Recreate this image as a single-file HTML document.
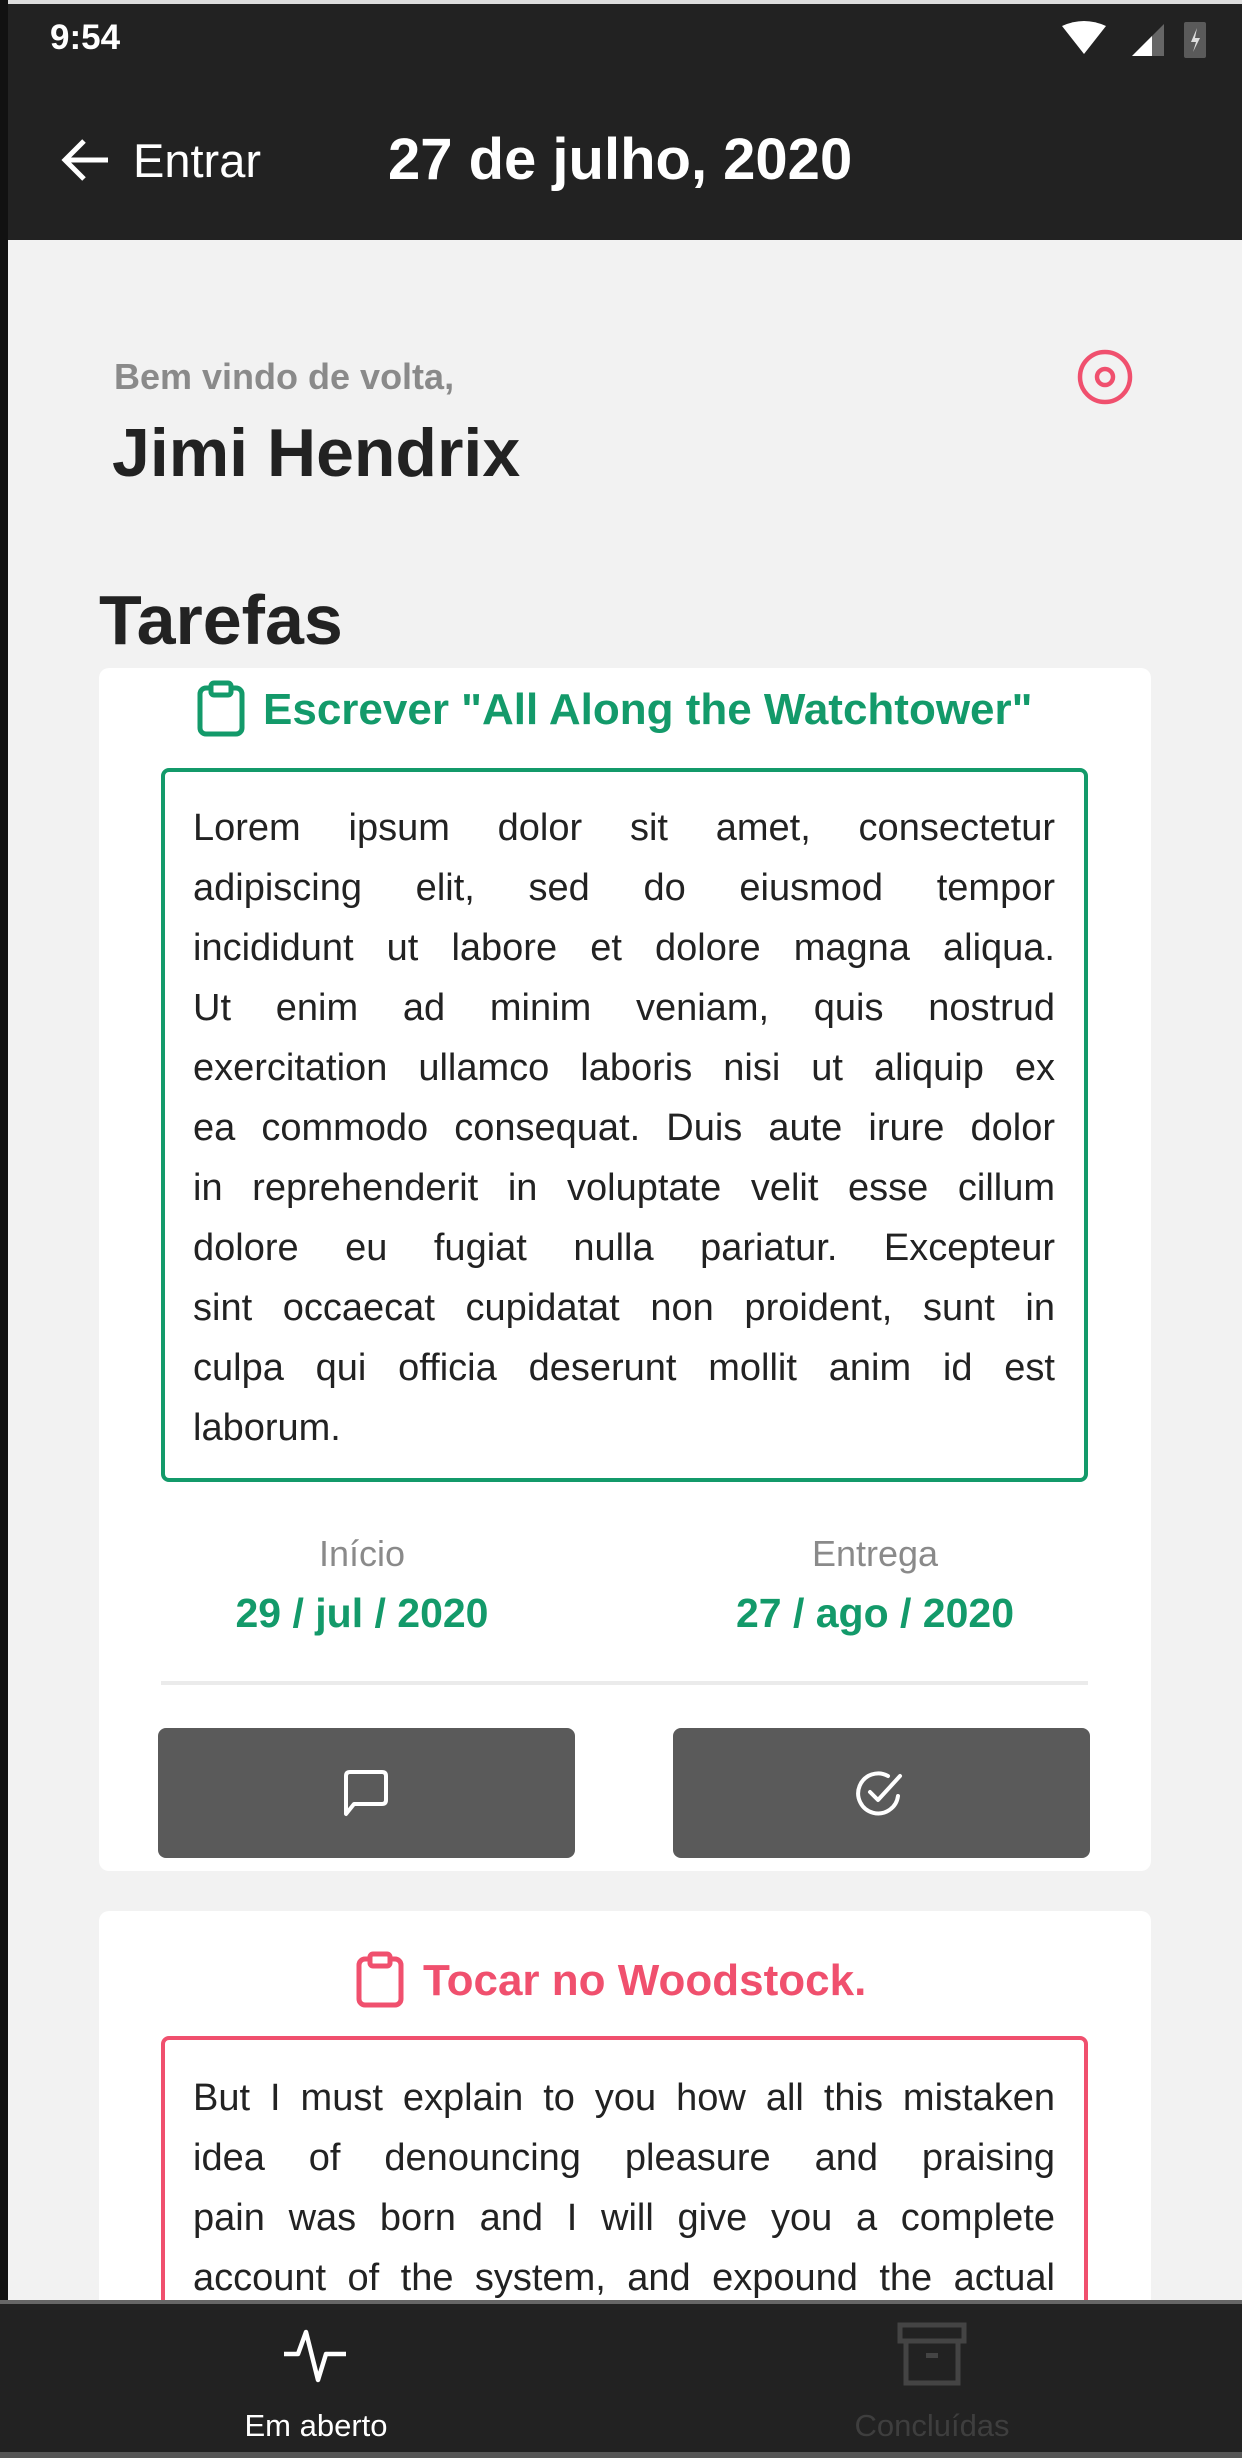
<!DOCTYPE html>
<html><head><meta charset="utf-8"><style>
*{margin:0;padding:0;box-sizing:border-box}
html,body{width:1242px;height:2458px;overflow:hidden}
body{background:#f2f2f2;font-family:"Liberation Sans",sans-serif;position:relative}
.abs{position:absolute}
.txt{white-space:nowrap}
.para div{text-align:justify;text-align-last:justify;white-space:nowrap;height:60px;line-height:60px}
.para div.l{text-align-last:left}
</style></head><body>
<div class="abs" style="left:0;top:0;width:1242px;height:4px;background:#ddd"></div>
<div class="abs" style="left:0;top:4px;width:1242px;height:236px;background:#222"></div>
<div class="abs" style="left:0;top:0;width:8px;height:2458px;background:#111"></div>
<div class="abs txt" style="left:50px;top:18px;color:#fff;font-size:35px;font-weight:bold;">9:54</div>
<svg class="abs" style="left:1060px;top:16px" width="180" height="44" viewBox="0 0 180 44">
<path d="M2 10 Q24 0 46 10 L24 38 Z" fill="#fff"/>
<path d="M72 40 L104 8 L104 40 Z" fill="#666"/><path d="M72 40 L92 20 L92 40 Z" fill="#fff"/>
<rect x="124" y="6" width="22" height="36" rx="2" fill="#5a5a5a"/><path d="M137 12 L131 26 L136 26 L133 36 L140 22 L135 22 Z" fill="#ddd"/>
</svg>
<svg class="abs" style="left:60px;top:135px" width="52" height="50" viewBox="0 0 52 50"><path d="M48 25 H6 M24 6 L5 25 L24 44" stroke="#fff" stroke-width="5" fill="none"/></svg>
<div class="abs txt" style="left:133px;top:133px;color:#fff;font-size:47px;">Entrar</div>
<div class="abs txt" style="left:388px;top:126px;color:#fff;font-size:58px;font-weight:bold;">27 de julho, 2020</div>

<div class="abs txt" style="left:114px;top:356px;color:#8a8a8a;font-size:36px;font-weight:bold;">Bem vindo de volta,</div>
<div class="abs txt" style="left:112px;top:414px;color:#222;font-size:68px;font-weight:bold;">Jimi Hendrix</div>
<svg class="abs" style="left:1076px;top:348px" width="58" height="58" viewBox="0 0 58 58"><circle cx="29" cy="29" r="25" stroke="#f0506e" stroke-width="4.5" fill="none"/><circle cx="29" cy="29" r="8" stroke="#f0506e" stroke-width="4.5" fill="none"/></svg>
<div class="abs txt" style="left:99px;top:580px;color:#222;font-size:70px;font-weight:bold;">Tarefas</div>

<!-- card1 -->
<div class="abs" style="left:99px;top:668px;width:1052px;height:1203px;background:#fff;border-radius:10px"></div>
<svg class="abs" style="left:196px;top:680px" width="52" height="58" viewBox="0 0 52 58"><rect x="4" y="8" width="42" height="46" rx="6" stroke="#139a6a" stroke-width="5" fill="none"/><rect x="15" y="3" width="20" height="12" rx="3" stroke="#139a6a" stroke-width="5" fill="#fff"/></svg>
<div class="abs txt" style="left:263px;top:685px;color:#139a6a;font-size:44px;font-weight:bold;">Escrever "All Along the Watchtower"</div>
<div class="abs" style="left:161px;top:768px;width:927px;height:714px;border:4px solid #139a6a;border-radius:8px"></div>
<div class="abs para" style="left:193px;top:798px;width:862px;color:#222;font-size:38px;">
<div>Lorem ipsum dolor sit amet, consectetur</div>
<div>adipiscing elit, sed do eiusmod tempor</div>
<div>incididunt ut labore et dolore magna aliqua.</div>
<div>Ut enim ad minim veniam, quis nostrud</div>
<div>exercitation ullamco laboris nisi ut aliquip ex</div>
<div>ea commodo consequat. Duis aute irure dolor</div>
<div>in reprehenderit in voluptate velit esse cillum</div>
<div>dolore eu fugiat nulla pariatur. Excepteur</div>
<div>sint occaecat cupidatat non proident, sunt in</div>
<div>culpa qui officia deserunt mollit anim id est</div>
<div class="l">laborum.</div>
</div>
<div class="abs txt" style="left:262px;width:200px;text-align:center;top:1533px;color:#8a8a8a;font-size:36px;">Início</div>
<div class="abs txt" style="left:212px;width:300px;text-align:center;top:1590px;color:#139a6a;font-size:41px;font-weight:bold;">29 / jul / 2020</div>
<div class="abs txt" style="left:775px;width:200px;text-align:center;top:1533px;color:#8a8a8a;font-size:36px;">Entrega</div>
<div class="abs txt" style="left:725px;width:300px;text-align:center;top:1590px;color:#139a6a;font-size:41px;font-weight:bold;">27 / ago / 2020</div>
<div class="abs" style="left:161px;top:1681px;width:927px;height:4px;background:#ebebeb"></div>
<div class="abs" style="left:158px;top:1728px;width:417px;height:130px;background:#5a5a5a;border-radius:8px"></div>
<div class="abs" style="left:673px;top:1728px;width:417px;height:130px;background:#5a5a5a;border-radius:8px"></div>
<svg class="abs" style="left:338px;top:1766px" width="56" height="56" viewBox="0 0 56 56"><path d="M8 48 V10 Q8 6 12 6 H44 Q48 6 48 10 V34 Q48 38 44 38 H16 Z" stroke="#fff" stroke-width="4" fill="none" stroke-linejoin="round"/></svg>
<svg class="abs" style="left:852px;top:1766px" width="60" height="56" viewBox="0 0 60 56"><path d="M46 30 A20 20 0 1 1 36 10" stroke="#fff" stroke-width="4" fill="none" stroke-linecap="round"/><path d="M18 26 L26 34 L48 10" stroke="#fff" stroke-width="4" fill="none" stroke-linecap="round" stroke-linejoin="round"/></svg>

<!-- card2 -->
<div class="abs" style="left:99px;top:1911px;width:1052px;height:389px;background:#fff;border-radius:10px 10px 0 0;overflow:hidden">
<svg class="abs" style="left:256px;top:40px" width="52" height="58" viewBox="0 0 52 58"><rect x="4" y="8" width="42" height="46" rx="6" stroke="#f0506e" stroke-width="5" fill="none"/><rect x="15" y="3" width="20" height="12" rx="3" stroke="#f0506e" stroke-width="5" fill="#fff"/></svg>
<div class="abs txt" style="left:324px;top:45px;color:#f0506e;font-size:44px;font-weight:bold;">Tocar no Woodstock.</div>
<div class="abs" style="left:62px;top:125px;width:927px;height:400px;border:4px solid #f0506e;border-radius:8px"></div>
<div class="abs para" style="left:94px;top:157px;width:862px;color:#222;font-size:38px;">
<div>But I must explain to you how all this mistaken</div>
<div>idea of denouncing pleasure and praising</div>
<div>pain was born and I will give you a complete</div>
<div>account of the system, and expound the actual</div>
</div>
</div>

<!-- bottom nav -->
<div class="abs" style="left:0;top:2300px;width:1242px;height:4px;background:#666"></div>
<div class="abs" style="left:0;top:2304px;width:1242px;height:150px;background:#222"></div>
<div class="abs" style="left:0;top:2452px;width:1242px;height:6px;background:#555"></div>
<svg class="abs" style="left:280px;top:2320px" width="72" height="66" viewBox="0 0 72 66"><path d="M4 34 H18 L26 12 L38 60 L46 34 H66" stroke="#fff" stroke-width="4.5" fill="none" stroke-linejoin="round"/></svg>
<div class="abs txt" style="left:196px;width:240px;text-align:center;top:2408px;color:#fff;font-size:31px;">Em aberto</div>
<svg class="abs" style="left:896px;top:2321px" width="72" height="66" viewBox="0 0 72 66"><rect x="4" y="4" width="64" height="16" stroke="#444" stroke-width="5" fill="none"/><rect x="10" y="20" width="52" height="42" stroke="#444" stroke-width="5" fill="none"/><rect x="30" y="32" width="12" height="5" fill="#444"/></svg>
<div class="abs txt" style="left:812px;width:240px;text-align:center;top:2408px;color:#3e3e3e;font-size:31px;">Concluídas</div>
</body></html>
